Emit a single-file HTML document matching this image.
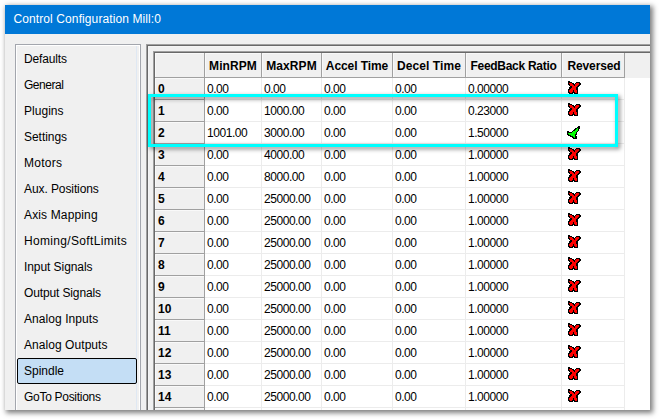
<!DOCTYPE html>
<html><head><meta charset="utf-8"><title>Control Configuration Mill:0</title>
<style>
html,body{margin:0;padding:0;background:#fff;}
body{width:659px;height:419px;overflow:hidden;position:relative;font-family:"Liberation Sans",Arial,sans-serif;font-size:12px;color:#000;}
.win{position:absolute;left:5px;top:5px;width:645px;height:405px;background:#f0f0f0;box-shadow:2px 2px 5px 1px rgba(0,0,0,.5);}
.clip{position:absolute;left:0;top:0;width:645px;height:405px;overflow:hidden;}
.title{position:absolute;left:0;top:0;width:645px;height:29px;background:#0078d7;color:#fff;line-height:29px;white-space:nowrap;}
.title span{position:absolute;left:8.5px;top:0;letter-spacing:.1px}
.list{position:absolute;left:10px;top:39px;width:124px;height:420px;border:1px solid #a3a6ad;box-shadow:inset 1px 1px 0 #fff, inset -1px 0 0 #fff;}
.list .vl{position:absolute;left:120px;top:1px;width:1px;height:420px;background:#dfe8f3;}
.it{position:absolute;left:8px;height:26px;line-height:26px;white-space:nowrap;}
.sel{position:absolute;left:1px;top:313px;width:118px;height:24px;border:1px solid #000;border-radius:2px;background:#c4def5;}
.panel{position:absolute;left:141px;top:39px;width:600px;height:420px;border-left:1px solid #a0a0a0;border-top:1px solid #a0a0a0;}
.panel .in{position:absolute;left:0;top:0;width:600px;height:420px;border-left:1px solid #696969;border-top:1px solid #696969;box-shadow:inset 1px 1px 0 #f5f5f5;}
.grid{position:absolute;left:148px;top:46px;width:600px;height:420px;border-left:1px solid #a0a0a0;border-top:1px solid #a0a0a0;}
.grid .in{position:absolute;left:0;top:0;width:600px;height:420px;border-left:1px solid #696969;border-top:1px solid #696969;background:#fff;}
.hdr{position:absolute;top:48px;height:24px;background:#f0f0f0;border-right:1px solid #a0a0a0;border-bottom:1px solid #a0a0a0;box-shadow:inset 1px 1px 0 #f9f9f9;font-weight:bold;text-align:center;line-height:26px;white-space:nowrap;}
.rl{position:absolute;left:150px;width:49px;height:21px;background:#f0f0f0;border-right:1px solid #a0a0a0;border-bottom:1px solid #a0a0a0;box-shadow:inset 1px 1px 0 #f9f9f9;font-weight:bold;line-height:23px;text-indent:3px;}
.c{position:absolute;height:21px;line-height:23px;white-space:nowrap;letter-spacing:-.45px;}
.hl{position:absolute;height:1px;left:200px;width:420px;background:#ececec;}
.vline{position:absolute;width:1px;top:73px;height:400px;background:#ececec;}
svg.ic{position:absolute;width:13px;height:13px;shape-rendering:crispEdges;}
.mag{position:absolute;left:143px;top:89px;width:464px;height:47px;border:3px solid #00ffff;filter:drop-shadow(2.5px 2.5px 2px rgba(0,0,0,.5));}
</style></head><body>
<svg width="0" height="0" style="position:absolute"><defs><symbol id="xi" viewBox="0 0 13 13"><rect x="0" y="0" width="2" height="1" fill="#000"/><rect x="0" y="1" width="4" height="1" fill="#000"/><rect x="8" y="1" width="4" height="1" fill="#000"/><rect x="0" y="2" width="1" height="1" fill="#000"/><rect x="1" y="2" width="3" height="1" fill="#f00"/><rect x="4" y="2" width="2" height="1" fill="#000"/><rect x="7" y="2" width="1" height="1" fill="#000"/><rect x="8" y="2" width="3" height="1" fill="#f00"/><rect x="11" y="2" width="2" height="1" fill="#000"/><rect x="0" y="3" width="2" height="1" fill="#000"/><rect x="2" y="3" width="3" height="1" fill="#f00"/><rect x="5" y="3" width="2" height="1" fill="#000"/><rect x="7" y="3" width="4" height="1" fill="#f00"/><rect x="11" y="3" width="2" height="1" fill="#000"/><rect x="1" y="4" width="1" height="1" fill="#000"/><rect x="2" y="4" width="4" height="1" fill="#f00"/><rect x="6" y="4" width="1" height="1" fill="#000"/><rect x="7" y="4" width="3" height="1" fill="#f00"/><rect x="10" y="4" width="2" height="1" fill="#000"/><rect x="2" y="5" width="2" height="1" fill="#000"/><rect x="4" y="5" width="5" height="1" fill="#f00"/><rect x="9" y="5" width="2" height="1" fill="#000"/><rect x="1" y="6" width="3" height="1" fill="#000"/><rect x="4" y="6" width="4" height="1" fill="#f00"/><rect x="8" y="6" width="2" height="1" fill="#000"/><rect x="1" y="7" width="2" height="1" fill="#000"/><rect x="3" y="7" width="5" height="1" fill="#f00"/><rect x="8" y="7" width="2" height="1" fill="#000"/><rect x="0" y="8" width="2" height="1" fill="#000"/><rect x="2" y="8" width="6" height="1" fill="#f00"/><rect x="8" y="8" width="2" height="1" fill="#000"/><rect x="0" y="9" width="1" height="1" fill="#000"/><rect x="1" y="9" width="4" height="1" fill="#f00"/><rect x="5" y="9" width="1" height="1" fill="#000"/><rect x="6" y="9" width="3" height="1" fill="#f00"/><rect x="9" y="9" width="1" height="1" fill="#000"/><rect x="0" y="10" width="1" height="1" fill="#000"/><rect x="1" y="10" width="4" height="1" fill="#f00"/><rect x="5" y="10" width="1" height="1" fill="#000"/><rect x="6" y="10" width="3" height="1" fill="#f00"/><rect x="9" y="10" width="1" height="1" fill="#000"/><rect x="0" y="11" width="2" height="1" fill="#000"/><rect x="2" y="11" width="2" height="1" fill="#f00"/><rect x="4" y="11" width="3" height="1" fill="#000"/><rect x="7" y="11" width="2" height="1" fill="#f00"/><rect x="9" y="11" width="1" height="1" fill="#000"/><rect x="1" y="12" width="4" height="1" fill="#000"/><rect x="6" y="12" width="4" height="1" fill="#000"/></symbol><symbol id="ck" viewBox="0 0 13 13"><rect x="11" y="0" width="2" height="1" fill="#000"/><rect x="10" y="1" width="3" height="1" fill="#000"/><rect x="8" y="2" width="2" height="1" fill="#000"/><rect x="10" y="2" width="1" height="1" fill="#0f0"/><rect x="11" y="2" width="2" height="1" fill="#000"/><rect x="7" y="3" width="2" height="1" fill="#000"/><rect x="9" y="3" width="2" height="1" fill="#0f0"/><rect x="11" y="3" width="1" height="1" fill="#000"/><rect x="6" y="4" width="2" height="1" fill="#000"/><rect x="8" y="4" width="3" height="1" fill="#0f0"/><rect x="11" y="4" width="1" height="1" fill="#000"/><rect x="0" y="5" width="2" height="1" fill="#000"/><rect x="5" y="5" width="1" height="1" fill="#000"/><rect x="6" y="5" width="4" height="1" fill="#0f0"/><rect x="10" y="5" width="1" height="1" fill="#000"/><rect x="0" y="6" width="5" height="1" fill="#000"/><rect x="5" y="6" width="4" height="1" fill="#0f0"/><rect x="9" y="6" width="1" height="1" fill="#000"/><rect x="0" y="7" width="1" height="1" fill="#000"/><rect x="1" y="7" width="8" height="1" fill="#0f0"/><rect x="9" y="7" width="1" height="1" fill="#000"/><rect x="0" y="8" width="2" height="1" fill="#000"/><rect x="2" y="8" width="6" height="1" fill="#0f0"/><rect x="8" y="8" width="2" height="1" fill="#000"/><rect x="1" y="9" width="3" height="1" fill="#000"/><rect x="4" y="9" width="4" height="1" fill="#0f0"/><rect x="8" y="9" width="1" height="1" fill="#000"/><rect x="3" y="10" width="3" height="1" fill="#000"/><rect x="6" y="10" width="2" height="1" fill="#0f0"/><rect x="8" y="10" width="2" height="1" fill="#000"/><rect x="5" y="11" width="2" height="1" fill="#000"/><rect x="7" y="11" width="1" height="1" fill="#0f0"/><rect x="8" y="11" width="2" height="1" fill="#000"/><rect x="6" y="12" width="4" height="1" fill="#000"/></symbol></defs></svg>
<div class="win"><div class="clip">
<div class="title"><span>Control Configuration Mill:0</span></div>
<div class="list"><div class="vl"></div><div class="sel"></div>
<div class="it" style="top:1px;letter-spacing:-0.14px">Defaults</div>
<div class="it" style="top:27px;letter-spacing:-0.47px">General</div>
<div class="it" style="top:53px;letter-spacing:0.03px">Plugins</div>
<div class="it" style="top:79px;letter-spacing:-0.04px">Settings</div>
<div class="it" style="top:105px;letter-spacing:0.26px">Motors</div>
<div class="it" style="top:131px;letter-spacing:-0.09px">Aux. Positions</div>
<div class="it" style="top:157px;letter-spacing:0.14px">Axis Mapping</div>
<div class="it" style="top:183px;letter-spacing:0.33px">Homing/SoftLimits</div>
<div class="it" style="top:209px;letter-spacing:-0.07px">Input Signals</div>
<div class="it" style="top:235px;letter-spacing:-0.13px">Output Signals</div>
<div class="it" style="top:261px;letter-spacing:0.07px">Analog Inputs</div>
<div class="it" style="top:287px;letter-spacing:0.06px">Analog Outputs</div>
<div class="it" style="top:313px;letter-spacing:0.0px">Spindle</div>
<div class="it" style="top:339px;letter-spacing:-0.29px">GoTo Positions</div>
</div>
<div class="panel"><div class="in"></div></div>
<div class="grid"><div class="in"></div></div>
<div class="hdr" style="left:150px;width:49px"></div>
<div class="hdr" style="left:200px;width:56px;letter-spacing:0.1px;text-indent:0px">MinRPM</div>
<div class="hdr" style="left:257px;width:59px;letter-spacing:0.1px;text-indent:0px">MaxRPM</div>
<div class="hdr" style="left:317px;width:70px;letter-spacing:-0.08px;text-indent:0px">Accel Time</div>
<div class="hdr" style="left:388px;width:72px;letter-spacing:0.07px;text-indent:0px">Decel Time</div>
<div class="hdr" style="left:461px;width:95px;letter-spacing:-0.28px;text-indent:0px">FeedBack Ratio</div>
<div class="hdr" style="left:557px;width:62px;letter-spacing:-0.12px;text-indent:2px">Reversed</div>
<div style="position:absolute;left:620px;top:48px;width:40px;height:25px;background:#f0f0f0"></div>
<div class="vline" style="left:256px"></div>
<div class="vline" style="left:316px"></div>
<div class="vline" style="left:387px"></div>
<div class="vline" style="left:460px"></div>
<div class="vline" style="left:556px"></div>
<div class="vline" style="left:619px"></div>
<div class="rl" style="top:73px">0</div>
<div class="hl" style="top:94px"></div>
<div class="c" style="left:202px;top:73px">0.00</div>
<div class="c" style="left:259px;top:73px">0.00</div>
<div class="c" style="left:319px;top:73px">0.00</div>
<div class="c" style="left:390px;top:73px">0.00</div>
<div class="c" style="left:463px;top:73px">0.00000</div>
<svg class="ic" style="left:563px;top:76px"><use href="#xi"/></svg>
<div class="rl" style="top:95px">1</div>
<div class="hl" style="top:116px"></div>
<div class="c" style="left:202px;top:95px">0.00</div>
<div class="c" style="left:259px;top:95px">1000.00</div>
<div class="c" style="left:319px;top:95px">0.00</div>
<div class="c" style="left:390px;top:95px">0.00</div>
<div class="c" style="left:463px;top:95px">0.23000</div>
<svg class="ic" style="left:563px;top:98px"><use href="#xi"/></svg>
<div class="rl" style="top:117px">2</div>
<div class="hl" style="top:138px"></div>
<div class="c" style="left:202px;top:117px">1001.00</div>
<div class="c" style="left:259px;top:117px">3000.00</div>
<div class="c" style="left:319px;top:117px">0.00</div>
<div class="c" style="left:390px;top:117px">0.00</div>
<div class="c" style="left:463px;top:117px">1.50000</div>
<svg class="ic" style="left:562px;top:121px"><use href="#ck"/></svg>
<div class="rl" style="top:139px">3</div>
<div class="hl" style="top:160px"></div>
<div class="c" style="left:202px;top:139px">0.00</div>
<div class="c" style="left:259px;top:139px">4000.00</div>
<div class="c" style="left:319px;top:139px">0.00</div>
<div class="c" style="left:390px;top:139px">0.00</div>
<div class="c" style="left:463px;top:139px">1.00000</div>
<svg class="ic" style="left:563px;top:142px"><use href="#xi"/></svg>
<div class="rl" style="top:161px">4</div>
<div class="hl" style="top:182px"></div>
<div class="c" style="left:202px;top:161px">0.00</div>
<div class="c" style="left:259px;top:161px">8000.00</div>
<div class="c" style="left:319px;top:161px">0.00</div>
<div class="c" style="left:390px;top:161px">0.00</div>
<div class="c" style="left:463px;top:161px">1.00000</div>
<svg class="ic" style="left:563px;top:164px"><use href="#xi"/></svg>
<div class="rl" style="top:183px">5</div>
<div class="hl" style="top:204px"></div>
<div class="c" style="left:202px;top:183px">0.00</div>
<div class="c" style="left:259px;top:183px">25000.00</div>
<div class="c" style="left:319px;top:183px">0.00</div>
<div class="c" style="left:390px;top:183px">0.00</div>
<div class="c" style="left:463px;top:183px">1.00000</div>
<svg class="ic" style="left:563px;top:186px"><use href="#xi"/></svg>
<div class="rl" style="top:205px">6</div>
<div class="hl" style="top:226px"></div>
<div class="c" style="left:202px;top:205px">0.00</div>
<div class="c" style="left:259px;top:205px">25000.00</div>
<div class="c" style="left:319px;top:205px">0.00</div>
<div class="c" style="left:390px;top:205px">0.00</div>
<div class="c" style="left:463px;top:205px">1.00000</div>
<svg class="ic" style="left:563px;top:208px"><use href="#xi"/></svg>
<div class="rl" style="top:227px">7</div>
<div class="hl" style="top:248px"></div>
<div class="c" style="left:202px;top:227px">0.00</div>
<div class="c" style="left:259px;top:227px">25000.00</div>
<div class="c" style="left:319px;top:227px">0.00</div>
<div class="c" style="left:390px;top:227px">0.00</div>
<div class="c" style="left:463px;top:227px">1.00000</div>
<svg class="ic" style="left:563px;top:230px"><use href="#xi"/></svg>
<div class="rl" style="top:249px">8</div>
<div class="hl" style="top:270px"></div>
<div class="c" style="left:202px;top:249px">0.00</div>
<div class="c" style="left:259px;top:249px">25000.00</div>
<div class="c" style="left:319px;top:249px">0.00</div>
<div class="c" style="left:390px;top:249px">0.00</div>
<div class="c" style="left:463px;top:249px">1.00000</div>
<svg class="ic" style="left:563px;top:252px"><use href="#xi"/></svg>
<div class="rl" style="top:271px">9</div>
<div class="hl" style="top:292px"></div>
<div class="c" style="left:202px;top:271px">0.00</div>
<div class="c" style="left:259px;top:271px">25000.00</div>
<div class="c" style="left:319px;top:271px">0.00</div>
<div class="c" style="left:390px;top:271px">0.00</div>
<div class="c" style="left:463px;top:271px">1.00000</div>
<svg class="ic" style="left:563px;top:274px"><use href="#xi"/></svg>
<div class="rl" style="top:293px">10</div>
<div class="hl" style="top:314px"></div>
<div class="c" style="left:202px;top:293px">0.00</div>
<div class="c" style="left:259px;top:293px">25000.00</div>
<div class="c" style="left:319px;top:293px">0.00</div>
<div class="c" style="left:390px;top:293px">0.00</div>
<div class="c" style="left:463px;top:293px">1.00000</div>
<svg class="ic" style="left:563px;top:296px"><use href="#xi"/></svg>
<div class="rl" style="top:315px">11</div>
<div class="hl" style="top:336px"></div>
<div class="c" style="left:202px;top:315px">0.00</div>
<div class="c" style="left:259px;top:315px">25000.00</div>
<div class="c" style="left:319px;top:315px">0.00</div>
<div class="c" style="left:390px;top:315px">0.00</div>
<div class="c" style="left:463px;top:315px">1.00000</div>
<svg class="ic" style="left:563px;top:318px"><use href="#xi"/></svg>
<div class="rl" style="top:337px">12</div>
<div class="hl" style="top:358px"></div>
<div class="c" style="left:202px;top:337px">0.00</div>
<div class="c" style="left:259px;top:337px">25000.00</div>
<div class="c" style="left:319px;top:337px">0.00</div>
<div class="c" style="left:390px;top:337px">0.00</div>
<div class="c" style="left:463px;top:337px">1.00000</div>
<svg class="ic" style="left:563px;top:340px"><use href="#xi"/></svg>
<div class="rl" style="top:359px">13</div>
<div class="hl" style="top:380px"></div>
<div class="c" style="left:202px;top:359px">0.00</div>
<div class="c" style="left:259px;top:359px">25000.00</div>
<div class="c" style="left:319px;top:359px">0.00</div>
<div class="c" style="left:390px;top:359px">0.00</div>
<div class="c" style="left:463px;top:359px">1.00000</div>
<svg class="ic" style="left:563px;top:362px"><use href="#xi"/></svg>
<div class="rl" style="top:381px">14</div>
<div class="hl" style="top:402px"></div>
<div class="c" style="left:202px;top:381px">0.00</div>
<div class="c" style="left:259px;top:381px">25000.00</div>
<div class="c" style="left:319px;top:381px">0.00</div>
<div class="c" style="left:390px;top:381px">0.00</div>
<div class="c" style="left:463px;top:381px">1.00000</div>
<svg class="ic" style="left:563px;top:384px"><use href="#xi"/></svg>
<div class="rl" style="top:403px">15</div>
<div class="hl" style="top:424px"></div>
<div class="c" style="left:202px;top:403px">0.00</div>
<div class="c" style="left:259px;top:403px">25000.00</div>
<div class="c" style="left:319px;top:403px">0.00</div>
<div class="c" style="left:390px;top:403px">0.00</div>
<div class="c" style="left:463px;top:403px">1.00000</div>
<svg class="ic" style="left:563px;top:406px"><use href="#xi"/></svg>
<div class="mag" id="mag"></div>
</div></div></body></html>
